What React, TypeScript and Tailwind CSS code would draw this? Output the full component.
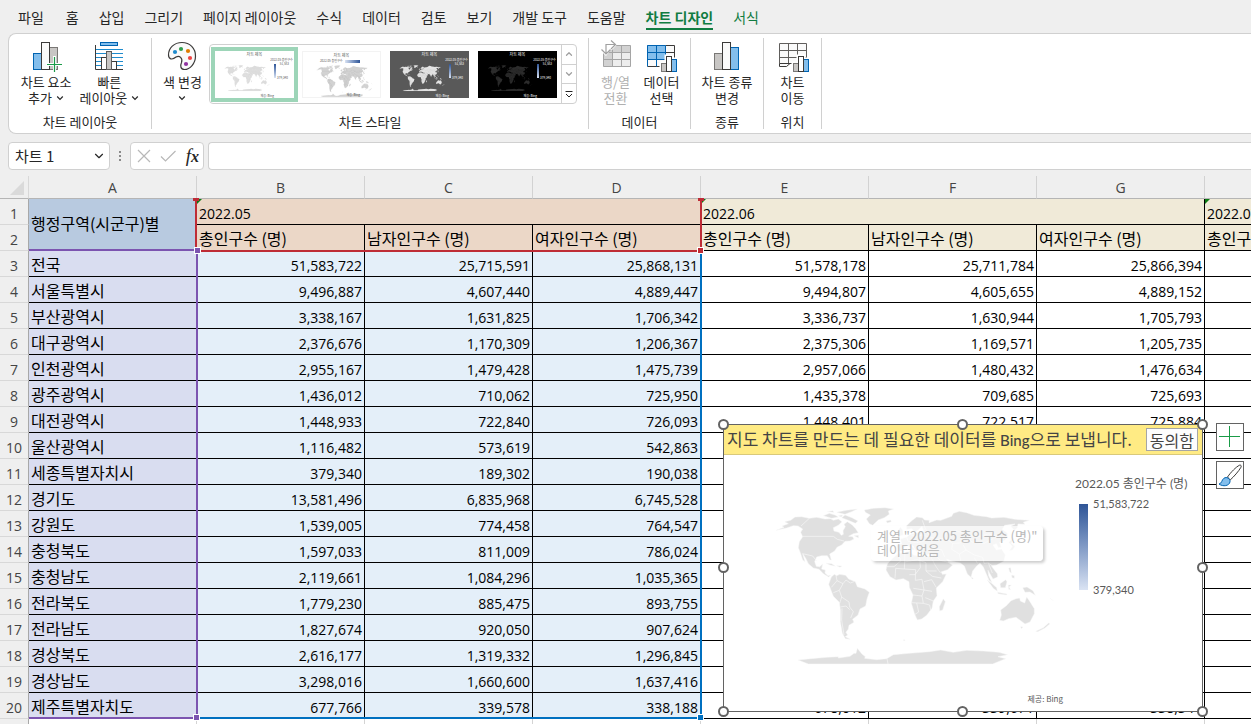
import React from "react";
import { ChevronDown, ChevronUp } from "lucide-react";

const menuTabs = ["홈", "삽입", "그리기", "페이지 레이아웃", "수식", "데이터", "검토", "보기", "개발 도구", "도움말"];

const columns = ["A", "B", "C", "D", "E", "F", "G", "H"];

const rows: string[][] = [
  ["전국", "51,583,722", "25,715,591", "25,868,131", "51,578,178", "25,711,784", "25,866,394"],
  ["서울특별시", "9,496,887", "4,607,440", "4,889,447", "9,494,807", "4,605,655", "4,889,152"],
  ["부산광역시", "3,338,167", "1,631,825", "1,706,342", "3,336,737", "1,630,944", "1,705,793"],
  ["대구광역시", "2,376,676", "1,170,309", "1,206,367", "2,375,306", "1,169,571", "1,205,735"],
  ["인천광역시", "2,955,167", "1,479,428", "1,475,739", "2,957,066", "1,480,432", "1,476,634"],
  ["광주광역시", "1,436,012", "710,062", "725,950", "1,435,378", "709,685", "725,693"],
  ["대전광역시", "1,448,933", "722,840", "726,093", "1,448,401", "722,517", "725,884"],
  ["울산광역시", "1,116,482", "573,619", "542,863", "", "", ""],
  ["세종특별자치시", "379,340", "189,302", "190,038", "", "", ""],
  ["경기도", "13,581,496", "6,835,968", "6,745,528", "", "", ""],
  ["강원도", "1,539,005", "774,458", "764,547", "", "", ""],
  ["충청북도", "1,597,033", "811,009", "786,024", "", "", ""],
  ["충청남도", "2,119,661", "1,084,296", "1,035,365", "", "", ""],
  ["전라북도", "1,779,230", "885,475", "893,755", "", "", ""],
  ["전라남도", "1,827,674", "920,050", "907,624", "", "", ""],
  ["경상북도", "2,616,177", "1,319,332", "1,296,845", "", "", ""],
  ["경상남도", "3,298,016", "1,660,600", "1,637,416", "", "", ""],
  ["제주특별자치도", "677,766", "339,578", "338,188", "678,012", "339,671", "338,341"],
];

type Bar = { x: number; y: number; w: number; fill: string; stroke: string };

function Bars({ bars, bottom }: { bars: Bar[]; bottom: number }) {
  return (
    <>
      {bars.map((b) => (
        <rect key={b.x} x={b.x} y={b.y} width={b.w} height={bottom - b.y} fill={b.fill} stroke={b.stroke} />
      ))}
    </>
  );
}

const GRAY = "#c8c6c4";
const DARK = "#3b3a39";
const BLUE = "#83beec";
const BLUE_LINE = "#0063b1";

const smallBars: Bar[] = [
  { x: 16.5, y: 23.5, w: 5, fill: GRAY, stroke: "#797775" },
  { x: 26.5, y: 19.5, w: 5, fill: BLUE, stroke: BLUE_LINE },
  { x: 21.5, y: 16.5, w: 5, fill: "#fff", stroke: DARK },
];

function AddElementIcon() {
  return (
    <svg viewBox="0 0 32 32" className="size-8" aria-hidden="true">
      <Bars
        bottom={29.5}
        bars={[
          { x: 3.5, y: 13.5, w: 8, fill: BLUE, stroke: BLUE_LINE },
          { x: 19.5, y: 7.5, w: 8, fill: GRAY, stroke: "#797775" },
          { x: 11.5, y: 2.5, w: 8, fill: "#fafafa", stroke: DARK },
        ]}
      />
      <path d="M24.5 16V32M16 24.5H32" stroke="#fff" strokeWidth="3" />
      <path d="M24.5 17V32M17 24.5H32" stroke="#1a9b48" strokeWidth="1.2" />
    </svg>
  );
}

function QuickLayoutIcon() {
  return (
    <svg viewBox="0 0 32 32" className="size-8" aria-hidden="true">
      <path d="M3 9.5H30M3 13.5H30M3 17.5H30M3 21.5H30M3 25.5H30" stroke="#1e8bcd" />
      <rect x="7.5" y="2.5" width="17" height="3" fill={BLUE} stroke={BLUE_LINE} />
      <path d="M2.5 5V29.5H30" fill="none" stroke={DARK} />
      <Bars
        bottom={29.5}
        bars={[
          { x: 8.5, y: 17.5, w: 5, fill: "#fff", stroke: DARK },
          { x: 18.5, y: 21.5, w: 5, fill: "#fff", stroke: DARK },
          { x: 13.5, y: 11.5, w: 5, fill: GRAY, stroke: "#605e5c" },
        ]}
      />
    </svg>
  );
}

function PaletteIcon() {
  return (
    <svg viewBox="0 0 32 32" className="size-8" aria-hidden="true">
      <path
        d="M2.5 15C2.5 8 8 2.5 16 2.5S29.5 8.5 29.5 16 24 29.5 18.5 29.5C14.5 29.5 14 26 15.5 22.5 17 18 13.5 15 10 17 6 20.5 2.5 19 2.5 15Z"
        fill="#fafafa"
        stroke={DARK}
        strokeWidth="1.2"
      />
      <circle cx="9" cy="12" r="2.1" fill="#1e8bcd" />
      <circle cx="15" cy="9" r="2.1" fill="#2f9e4d" />
      <circle cx="22" cy="11" r="2.1" fill="#e07c00" />
      <circle cx="24" cy="18" r="2.1" fill="#ee4444" />
      <circle cx="20" cy="24" r="2.1" fill="#9033a0" />
    </svg>
  );
}

function SwitchIcon() {
  return (
    <svg viewBox="0 0 32 32" className="size-8" fill="none" aria-hidden="true">
      <rect x="3.5" y="5.5" width="27" height="21" fill="#ededed" />
      <path d="M3.5 5.5H30.5V12.5H12.5V26.5H3.5Z" fill="#d2d2d2" />
      <path d="M3.5 5.5H30.5V26.5H3.5ZM3.5 12.5H30.5M3.5 19.5H30.5M12.5 5.5V26.5M21.5 5.5V26.5" stroke="#a5a5a5" />
      <path d="M0 2H10L11 0 17 4.5 12 10H9V12L6 16 0 10Z" fill="#fff" />
      <path d="M6 14V4.5H15M1.5 9.5 6 14 10.5 9.5M11 .5 15.5 4.5 11 9" stroke="#a0a0a0" strokeWidth="1.2" />
    </svg>
  );
}

function SelectDataIcon() {
  return (
    <svg viewBox="0 0 32 32" className="size-8" fill="none" aria-hidden="true">
      <rect x="2.5" y="5.5" width="27" height="21" fill="#fafafa" />
      <rect x="2.5" y="5.5" width="18" height="14" fill={BLUE} />
      <path d="M20.5 5.5H29.5V26.5M20.5 12.5H29.5M20.5 19.5H29.5M2.5 26.5H20" stroke={DARK} />
      <path d="M2.5 5.5H20.5V19.5H2.5ZM2.5 12.5H20.5M11.5 5.5V26.5M2.5 5.5V26.5" stroke={BLUE_LINE} />
      <path d="M14.5 32V21.5H19.5V14.5H28.5V17.5H32V32Z" fill="#fff" />
      <Bars bars={smallBars} bottom={31.5} />
    </svg>
  );
}

function ChangeTypeIcon() {
  return (
    <svg viewBox="0 0 32 32" className="size-8" aria-hidden="true">
      <Bars
        bottom={29.5}
        bars={[
          { x: 3.5, y: 13.5, w: 8, fill: GRAY, stroke: "#797775" },
          { x: 19.5, y: 7.5, w: 8, fill: BLUE, stroke: BLUE_LINE },
          { x: 11.5, y: 2.5, w: 8, fill: "#fafafa", stroke: DARK },
        ]}
      />
    </svg>
  );
}

function MoveChartIcon() {
  return (
    <svg viewBox="0 0 32 32" className="size-8" fill="none" aria-hidden="true">
      <path d="M2.5 3.5H29.5V23.5H13L10 27.5H5.5L2.5 23.5Z" fill="#fafafa" />
      <path d="M2.5 23.5V3.5H29.5V23.5M2.5 10.5H29.5M2.5 17.5H29.5M11.5 3.5V23.5M20.5 3.5V17.5" stroke="#605e5c" />
      <path d="M2.5 23.5H17M2.5 23.5V26.5H9.5L13 23.5" stroke={DARK} />
      <path d="M14.5 32V21.5H19.5V14.5H28.5V17.5H32V32Z" fill="#fff" />
      <Bars bars={smallBars} bottom={31.5} />
    </svg>
  );
}

function WorldMap({ className, land, border }: { className: string; land: string; border: string }) {
  return (
    <svg viewBox="0 0 870 540" className={className} aria-hidden="true">
      <g fill={land} stroke={border} strokeWidth="1.5" strokeLinejoin="round">
        <path d="M18 106 42 97 36 93 55 86 44 80 62 76 75 66 95 65 118 70 140 67 165 72 182 71 190 76 205 72 216 80 205 91 190 98 192 108 207 112 214 121 220 118 219 107 226 95 222 88 232 80 246 89 256 100 265 113 250 116 236 124 248 125 252 132 240 138 225 139 215 150 201 157 194 168 179 177 184 195 180 195 172 182 155 182 140 186 134 200 139 214 149 215 158 207 155 222 166 225 165 234 174 242 182 241 176 246 160 236 147 223 130 219 115 206 107 190 98 176 105 200 98 195 92 176 85 158 88 140 98 125 92 112 98 102 84 93 70 92 50 99Z" />
        <path d="M283 45 310 40 345 38 371 42 355 48 358 58 343 68 325 75 308 91 298 86 289 72 301 60 286 52Z" />
        <path d="M160 62 178 55 195 60 205 66 185 70ZM200 52 228 46 262 42 245 50 225 58ZM215 68 225 60 246 68 264 78 256 85 240 78ZM172 50 188 47 192 52ZM205 62 218 60 214 66ZM348 78 362 75 364 80 352 84ZM168 205 185 206 196 214 180 210ZM200 212 216 213 210 217ZM252 122 265 121 266 129Z" />
        <path d="M176 268 184 246 193 238 200 242 209 238 227 241 236 252 256 260 262 275 285 282 298 292 291 312 287 333 270 342 264 360 248 373 252 382 237 391 235 402 228 412 233 420 226 425 241 433 226 431 217 415 211 380 211 345 208 322 190 304Z" />
        <path d="M348 225 352 207 368 190 384 176 420 168 430 180 455 184 490 182 499 202 511 224 517 238 529 237 518 260 499 279 501 302 490 318 486 340 470 361 455 372 442 375 434 358 424 325 429 300 418 277 417 260 400 251 378 255 360 245Z" />
        <path d="M520 311 526 320 518 345 509 348 508 335Z" />
        <path d="M383 168 379 150 395 146 391 132 410 126 422 117 440 113 461 108 456 94 444 106 432 112 426 101 410 103 409 93 424 78 440 66 457 68 464 75 478 76 477 83 500 75 512 76 545 64 550 55 568 49 590 53 612 61 650 65 665 69 702 67 735 73 778 76 760 82 765 88 744 87 742 99 733 106 722 94 735 87 704 91 697 103 712 114 713 127 704 136 689 142 694 157 685 158 679 146 669 150 679 165 695 162 706 180 702 198 680 210 664 212 671 222 682 236 683 246 669 252 659 235 654 226 656 242 666 263 657 256 648 235 640 216 630 204 620 213 608 228 603 247 592 237 583 213 571 204 548 199 530 192 536 203 548 210 533 224 510 232 495 210 485 190 487 176 469 180 451 168 443 160 440 171 430 154 420 147 435 164 428 165 412 150 400 160 397 168Z" />
        <path d="M389 123 400 120 398 106 392 96 386 103 390 113ZM378 120 386 118 385 108 378 112ZM716 142 727 132 723 126 731 130 724 145 735 154 728 165 718 167 727 154ZM651 254 664 264 680 278 682 289 670 280ZM683 292 711 297 710 300 684 296ZM690 266 707 254 711 260 706 278 692 278ZM715 270 724 270 717 276 722 284 716 283ZM716 219 722 218 724 235 719 230ZM725 240 733 242 733 250 726 248ZM758 278 771 276 789 287 796 301 780 291 765 292ZM603 246 610 250 607 253ZM797 409 820 398 836 384 840 386 825 399 803 410ZM752 395 759 396 754 401ZM840 310 850 317ZM399 435 404 434 404 438Z" />
        <path d="M692 345 709 332 723 317 738 311 749 309 751 318 764 324 770 306 778 317 793 341 793 356 780 381 765 387 748 374 738 367 716 371 700 378 689 376 694 360Z" />
        <path d="M84 495 122 491 170 487 205 485 205 489 240 484 252 475 258 475 262 460 276 477 286 485 284 490 320 494 350 491 370 479 417 475 478 470 512 465 550 472 590 466 640 468 687 472 713 479 684 485 707 491 668 507H115Z" />
      </g>
      <g fill="none" stroke={border} strokeWidth="2" strokeLinejoin="round">
        <path d="M118 70 93 93M98 124H190L202 133 222 138M98 176 128 183 140 198M351 491 354 507" />
        <path d="M198 242 201 257 184 277M201 257 219 266 208 286 190 293M219 266 228 255 241 264 252 260M208 286 215 306 209 325M215 306 237 321 239 336 250 350 242 369M211 336 228 333 239 344M216 340 215 375 222 420" />
        <path d="M384 176 393 197 372 215H350M405 172 403 222 377 220 375 250M403 201 442 194 468 203V228L500 228M403 222 437 224 436 256M449 184 451 218 435 239 418 239M468 228 487 244 514 249M436 256 456 253 462 285 430 280M462 260 485 254 498 276M429 300 456 303 462 285 486 289M456 303 460 325 425 323M460 325 479 330 482 345M440 324 446 351 435 358M466 308 490 318" />
        <path d="M457 76 466 101 450 123M420 118 440 126 455 121 482 126 500 134 520 130M410 126 414 139 440 143 461 139M466 101 477 119M520 130 528 113 560 107 590 119 622 126 655 117 684 124 701 134M528 130 548 145 570 144 590 119M548 145 545 163 568 177 572 197M568 177 588 165 613 180 638 187 642 205M590 119 605 141 642 145 669 131M588 165 580 150M613 188 622 205M495 179 511 196 540 203M487 164 515 164 524 186M642 205 655 204 668 213M655 204 667 234" />
      </g>
    </svg>
  );
}

function RibbonButton({
  icon,
  lines,
  menu = false,
  disabled = false,
}: {
  icon: React.ReactNode;
  lines: string[];
  menu?: boolean;
  disabled?: boolean;
}) {
  return (
    <button
      type="button"
      disabled={disabled}
      className="flex shrink-0 flex-col items-center text-[13px] leading-4 text-[#262626] disabled:text-[#b0b0b0]"
    >
      {icon}
      <span className="mt-0.5">{lines[0]}</span>
      <span className="flex h-4 items-center gap-1">
        {lines[1]}
        {menu && (
          <svg viewBox="0 0 8 8" className="size-2" fill="none" stroke="#262626" strokeWidth="1.2" aria-hidden="true">
            <path d="M1.2 2.5 4 5.3 6.8 2.5" />
          </svg>
        )}
      </span>
    </button>
  );
}

function RibbonGroup({ label, className, children }: { label: string; className: string; children: React.ReactNode }) {
  return (
    <section
      aria-label={label}
      className={`flex shrink-0 flex-col items-center justify-between border-r border-[#d0d0d0] pt-0.5 ${className}`}
    >
      <div className="flex items-start">{children}</div>
      <span className="text-[13px] leading-[14px] text-[#262626]">{label}</span>
    </section>
  );
}

function StyleThumb({ kind }: { kind: "light" | "outline" | "dark" | "black" }) {
  const tone = {
    light: { box: "bg-white text-[#555]", land: "#dcdcdc", border: "#f4f4f4" },
    outline: { box: "bg-white text-[#555] border border-[#f3f3f3]", land: "#d2d2d2", border: "#a0a0a0" },
    dark: { box: "bg-[#595959] text-white", land: "#e4e4e4", border: "#a0a0a0" },
    black: { box: "bg-black text-white", land: "#2c2c2c", border: "#111111" },
  }[kind];
  const wide = kind === "outline";
  return (
    <span className={`relative flex h-[47px] w-[79px] flex-col items-center overflow-hidden ${tone.box}`}>
      <span className="text-[4px] leading-[6px]">차트 제목</span>
      <span className={`absolute text-[3px] leading-[3px] ${wide ? "top-[8px] left-[17px]" : "top-[8px] right-[1px]"}`}>
        2022.05 총인구수
      </span>
      <span
        className={
          wide
            ? "absolute top-[8px] left-[42px] h-[3px] w-[15px] bg-linear-to-r from-[#dae3f3] to-[#2f5597]"
            : "absolute top-[13px] right-[18px] h-[14px] w-[2px] bg-linear-to-b from-[#2f5597] to-[#dae3f3]"
        }
      />
      {!wide && <span className="absolute top-[12px] right-[5px] text-[3px] leading-[3px]">51,583</span>}
      {!wide && <span className="absolute top-[26px] right-[6px] text-[3px] leading-[3px]">379,340</span>}
      <WorldMap
        className={wide ? "absolute top-[11px] left-[9px] h-9 w-[65px]" : "absolute top-[11px] left-[8px] h-8 w-[48px]"}
        land={tone.land}
        border={tone.border}
      />
      <span className="absolute right-[20px] bottom-0 text-[3px] leading-[4px]">제공: Bing</span>
    </span>
  );
}

function Handle({ className }: { className: string }) {
  return <span className={`absolute size-[11px] rounded-full border-2 border-[#636363] bg-white ${className}`} />;
}

function MapChart() {
  return (
    <figure
      aria-label="지도 차트"
      className="absolute top-[248px] left-[723px] h-[288px] w-[480px] border border-[#636363] bg-white text-[#595959]"
    >
      <div className="flex h-[30px] items-center justify-between border-b border-[#d9c97a] bg-[#ffeb84] pr-1 pl-[3px] text-[17px] leading-6 whitespace-nowrap text-[#444]">
        <p>
          지도 차트를 만드는 데 필요한 데이터를{" "}
          <span className="font-['Lato','Noto_Sans_CJK_KR',sans-serif] text-[15px] font-medium">Bing</span>으로 보냅니다.
        </p>
        <button type="button" className="h-[23px] border border-[#a6a6a6] bg-[#fdfdfd] px-[3px] text-[16px] leading-5">
          동의함
        </button>
      </div>
      <WorldMap className="absolute top-[70px] left-[46px] h-[180px] w-[290px]" land="#e0e0e0" border="#f8f8f8" />
      <div className="absolute top-[101px] left-[147px] rounded-sm bg-white/70 px-1.5 pt-[3px] pb-1 text-[13px] leading-[14px] whitespace-nowrap text-[#b9b9b9] shadow-[2px_2px_3px_rgba(0,0,0,0.2)]">
        계열 "2022.05 총인구수 (명)"
        <br />
        데이터 없음
      </div>
      <div className="absolute top-[51px] left-[351px] font-['Lato','Noto_Sans_CJK_KR',sans-serif] text-[11px] leading-4 whitespace-nowrap">
        <p className="text-[12px]">2022.05 총인구수 (명)</p>
        <div className="mt-1 flex gap-[5px] pl-1">
          <span className="mt-2 h-[86px] w-[9px] bg-linear-to-b from-[#2f5597] to-[#dae3f3]" />
          <div className="flex h-[102px] flex-col justify-between">
            <span>51,583,722</span>
            <span>379,340</span>
          </div>
        </div>
      </div>
      <figcaption className="absolute right-[139px] bottom-[6px] text-[8px] leading-3">제공: Bing</figcaption>
      <Handle className="-top-[6px] -left-[6px]" />
      <Handle className="-top-[6px] left-[233px]" />
      <Handle className="-top-[6px] -right-[6px]" />
      <Handle className="top-[137px] -left-[6px]" />
      <Handle className="top-[137px] -right-[6px]" />
      <Handle className="-bottom-[6px] -left-[6px]" />
      <Handle className="-bottom-[6px] left-[233px]" />
      <Handle className="-right-[6px] -bottom-[6px]" />
    </figure>
  );
}

function BrushIcon() {
  return (
    <svg viewBox="0 0 26 26" className="size-[26px]" aria-hidden="true">
      <path d="M10.5 15C14 10 19 5 22.5 3.2 24 2.8 24.6 3.8 24 5.2 21.5 9.5 17 14.5 13.2 18Z" fill="#fff" stroke={DARK} />
      <path
        d="M2 22C5 21.5 4.5 18 7 16.2 9.5 14.5 13.5 16.5 13 19.8 12.3 24 6 25 2 22Z"
        fill={BLUE}
        stroke={BLUE_LINE}
      />
    </svg>
  );
}

function FlagCorner() {
  return <span className="absolute top-0 left-0 border-t-[5px] border-r-[5px] border-t-[#0b7a12] border-r-transparent" />;
}

const numberFont = "font-['Open_Sans','Noto_Sans_CJK_KR',sans-serif] text-[14px]";

function Sheet() {
  return (
    <div className="relative min-h-0 flex-1 overflow-hidden bg-white">
      <table className="w-[1373px] table-fixed border-separate border-spacing-0 leading-5 text-black">
        <colgroup>
          <col className="w-[29px]" />
          {columns.map((c) => (
            <col key={c} className="w-[168px]" />
          ))}
        </colgroup>
        <thead>
          <tr className={`h-[23px] bg-[#efefef] text-[#444] ${numberFont}`}>
            <th className="relative border-r border-b border-[#b5b5b5] border-r-[#d8d8d8] p-0">
              <svg viewBox="0 0 14 14" className="absolute right-1 bottom-[3px] size-[14px]" aria-hidden="true">
                <path d="M14 0V14H0Z" fill="#dadada" />
              </svg>
            </th>
            {columns.map((c) => (
              <th
                key={c}
                scope="col"
                className="border-r border-b border-[#b5b5b5] border-r-[#d2d2d2] p-0 pt-0.5 font-normal"
              >
                {c}
              </th>
            ))}
          </tr>
        </thead>
        <tbody>
          <tr className="h-[26px]">
            <th
              scope="row"
              className={`border-r border-b border-[#d8d8d8] border-r-[#a8a8a8] bg-[#efefef] p-0 pt-1 font-normal text-[#444] ${numberFont}`}
            >
              1
            </th>
            <td rowSpan={2} className="border-r border-b border-black bg-[#b8cae0] px-[2px] pt-0 pb-1 text-[16px]">
              행정구역(시군구)별
            </td>
            <td colSpan={3} className={`relative border-r border-b border-black bg-[#ebd7c7] px-[2px] pt-1 pb-0 ${numberFont}`}>
              <FlagCorner />
              2022.05
            </td>
            <td colSpan={3} className={`relative border-r border-b border-black bg-[#f0ead8] px-[2px] pt-1 pb-0 ${numberFont}`}>
              <FlagCorner />
              2022.06
            </td>
            <td className={`relative border-r border-b border-black bg-[#f0ead8] px-[2px] pt-1 pb-0 ${numberFont}`}>
              <FlagCorner />
              2022.07
            </td>
          </tr>
          <tr className="h-[26px] text-[16px]">
            <th
              scope="row"
              className={`border-r border-b border-[#d8d8d8] border-r-[#a8a8a8] bg-[#efefef] p-0 pt-1 font-normal text-[#444] ${numberFont}`}
            >
              2
            </th>
            {["총인구수 (명)", "남자인구수 (명)", "여자인구수 (명)", "총인구수 (명)", "남자인구수 (명)", "여자인구수 (명)", "총인구수 (명)"].map(
              (t, i) => (
                <td
                  key={i}
                  className={`border-r border-b border-black px-[2px] py-0 ${i < 3 ? "bg-[#ebd7c7]" : "bg-[#f0ead8]"}`}
                >
                  {t}
                </td>
              ),
            )}
          </tr>
          {rows.map((r, ri) => (
            <tr key={r[0]} className="h-[26px]">
              <th
                scope="row"
                className={`border-r border-b border-[#d8d8d8] border-r-[#a8a8a8] bg-[#efefef] p-0 pt-1 font-normal text-[#444] ${numberFont}`}
              >
                {ri + 3}
              </th>
              <td className="border-r border-b border-black bg-[#d9ddf0] px-[2px] py-0 text-[16px]">{r[0]}</td>
              {[1, 2, 3, 4, 5, 6, 7].map((ci) => (
                <td
                  key={ci}
                  className={`border-r border-b border-black px-[2px] pt-1 pb-0 text-right ${numberFont} ${ci < 4 ? "bg-[#e4eff9]" : "bg-white"}`}
                >
                  {r[ci]}
                </td>
              ))}
            </tr>
          ))}
          <tr className="h-[26px]">
            <th className="border-r border-[#a8a8a8] bg-[#efefef] p-0" />
            {columns.map((c) => (
              <td key={c} className="border-r border-[#d4d4d4] p-0" />
            ))}
          </tr>
        </tbody>
      </table>

      <div className="pointer-events-none absolute top-[74px] left-[197px] h-[469px] w-[505px] border-r-2 border-b-2 border-[#0070c0]">
        <span className="absolute -right-1 -bottom-1 size-[7px] border border-white bg-[#0070c0]" />
      </div>
      <div className="pointer-events-none absolute top-[74px] left-[29px] h-[469px] w-[169px] border-r-2 border-b-2 border-[#7c54b0]">
        <span className="absolute -right-1 -bottom-1 size-[7px] border border-white bg-[#7c54b0]" />
      </div>
      <div className="pointer-events-none absolute top-[23px] left-[195px] h-[53px] w-[507px] border-x-2 border-b-2 border-[#be2c36]">
        <span className="absolute -top-px -left-1 h-[3px] w-[6px] bg-[#be2c36]" />
        <span className="absolute -top-px -right-1 h-[3px] w-[6px] bg-[#be2c36]" />
        <span className="absolute -right-1 -bottom-1 size-[7px] border border-white bg-[#be2c36]" />
      </div>
      <div className="pointer-events-none absolute top-[73px] left-[29px] h-[2px] w-[168px] bg-[#7c54b0]">
        <span className="absolute -top-[2px] -right-1 size-[7px] border border-white bg-[#7c54b0]" />
      </div>

      <MapChart />
      <div className="absolute top-[247px] left-[1216px] flex flex-col gap-[10px]">
        <button
          type="button"
          aria-label="차트 요소"
          className="flex size-7 items-center justify-center border border-[#636363] bg-white"
        >
          <svg viewBox="0 0 22 22" className="size-[22px]" aria-hidden="true">
            <path d="M10.5 0V21M0 10.5H21" stroke="#1a9b48" />
          </svg>
        </button>
        <button
          type="button"
          aria-label="차트 스타일"
          className="flex size-7 items-center justify-center border border-[#636363] bg-white"
        >
          <BrushIcon />
        </button>
      </div>
    </div>
  );
}

export default function App() {
  return (
    <div className="flex h-screen flex-col overflow-hidden bg-[#efefef] font-['Noto_Sans_CJK_KR',sans-serif] text-[#262626]">
      <nav className="flex h-[33px] shrink-0 items-center gap-5 pt-0.5 pl-[18px] text-[14px] whitespace-nowrap">
        <button type="button" className="mr-0.5">
          파일
        </button>
        {menuTabs.map((t) => (
          <button type="button" key={t}>
            {t}
          </button>
        ))}
        <button type="button" className="border-b-2 border-[#107c41] leading-[22px] font-bold text-[#107c41]">
          차트 디자인
        </button>
        <button type="button" className="text-[#107c41]">
          서식
        </button>
      </nav>

      <div className="ml-2 flex h-[101px] shrink-0 rounded-l-lg border border-r-0 border-[#d0d0d0] bg-white py-1">
        <RibbonGroup label="차트 레이아웃" className="w-[143px]">
          <RibbonButton icon={<AddElementIcon />} lines={["차트 요소", "추가"]} menu />
          <span className="w-2" />
          <RibbonButton icon={<QuickLayoutIcon />} lines={["빠른", "레이아웃"]} menu />
        </RibbonGroup>
        <RibbonGroup label="차트 스타일" className="w-[437px]">
          <RibbonButton icon={<PaletteIcon />} lines={["색 변경", ""]} menu />
          <div className="mt-1 ml-[7px] flex h-[60px] overflow-hidden rounded border border-[#d0d0d0]">
            <div className="flex items-center pr-1">
              <button type="button" aria-label="스타일 1" className="ml-px border-4 border-[#9dd5b8]">
                <StyleThumb kind="light" />
              </button>
              <button type="button" aria-label="스타일 2" className="ml-1">
                <StyleThumb kind="outline" />
              </button>
              <button type="button" aria-label="스타일 3" className="ml-[9px]">
                <StyleThumb kind="dark" />
              </button>
              <button type="button" aria-label="스타일 4" className="ml-[9px]">
                <StyleThumb kind="black" />
              </button>
            </div>
            <div className="flex w-[15px] flex-col divide-y divide-[#d0d0d0] border-l border-[#d0d0d0] text-[#a0a0a0]">
              <button type="button" aria-label="위로" className="flex flex-1 items-center justify-center">
                <ChevronUp className="size-2.5" strokeWidth={3} />
              </button>
              <button type="button" aria-label="아래로" className="flex flex-1 items-center justify-center">
                <ChevronDown className="size-2.5" strokeWidth={3} />
              </button>
              <button type="button" aria-label="자세히" className="flex flex-1 items-center justify-center">
                <svg viewBox="0 0 8 8" className="size-2" fill="none" stroke="#262626" aria-hidden="true">
                  <path d="M0.5 1.5H7.5M1 4 4 7 7 4" />
                </svg>
              </button>
            </div>
          </div>
        </RibbonGroup>
        <RibbonGroup label="데이터" className="w-[102px]">
          <RibbonButton icon={<SwitchIcon />} lines={["행/열", "전환"]} disabled />
          <span className="w-3" />
          <RibbonButton icon={<SelectDataIcon />} lines={["데이터", "선택"]} />
        </RibbonGroup>
        <RibbonGroup label="종류" className="w-[73px]">
          <RibbonButton icon={<ChangeTypeIcon />} lines={["차트 종류", "변경"]} />
        </RibbonGroup>
        <RibbonGroup label="위치" className="w-[58px]">
          <RibbonButton icon={<MoveChartIcon />} lines={["차트", "이동"]} />
        </RibbonGroup>
      </div>

      <div className="flex h-[42px] shrink-0 items-center pt-[2px] pl-2">
        <div className="relative">
          <select
            aria-label="이름 상자"
            className="h-7 w-[102px] appearance-none rounded border border-[#d0d0d0] bg-white pl-1.5 text-[15px] leading-5"
          >
            <option>차트 1</option>
          </select>
          <ChevronDown className="pointer-events-none absolute top-[7px] right-1 size-3.5" strokeWidth={2} />
        </div>
        <svg viewBox="0 0 20 28" className="h-7 w-5 shrink-0" fill="#8a8a8a" aria-hidden="true">
          <path d="M9 9h2v2H9zM9 13h2v2H9zM9 17h2v2H9z" />
        </svg>
        <div className="flex h-7 w-[74px] shrink-0 items-center justify-between rounded border border-[#d0d0d0] bg-white pr-1 pl-1.5 text-[#b8b8b8]">
          <button type="button" aria-label="취소">
            <svg viewBox="0 0 14 14" className="size-3.5" fill="none" stroke="currentColor" aria-hidden="true">
              <path d="M1 1 13 13M13 1 1 13" strokeWidth="1.2" />
            </svg>
          </button>
          <button type="button" aria-label="입력">
            <svg viewBox="0 0 16 14" className="h-3.5 w-4" fill="none" stroke="currentColor" aria-hidden="true">
              <path d="M1 7.5 5.5 12 15.5 2" strokeWidth="1.2" />
            </svg>
          </button>
          <button
            type="button"
            aria-label="함수 삽입"
            className="font-['Liberation_Serif',serif] text-[19px] leading-5 text-[#262626] italic"
          >
            f<span className="text-[16px] font-bold">x</span>
          </button>
        </div>
        <input
          type="text"
          aria-label="수식 입력줄"
          className="ml-1 h-7 min-w-0 flex-1 rounded-l border border-r-0 border-[#d0d0d0] bg-white px-2 text-[15px]"
        />
      </div>

      <Sheet />
    </div>
  );
}
